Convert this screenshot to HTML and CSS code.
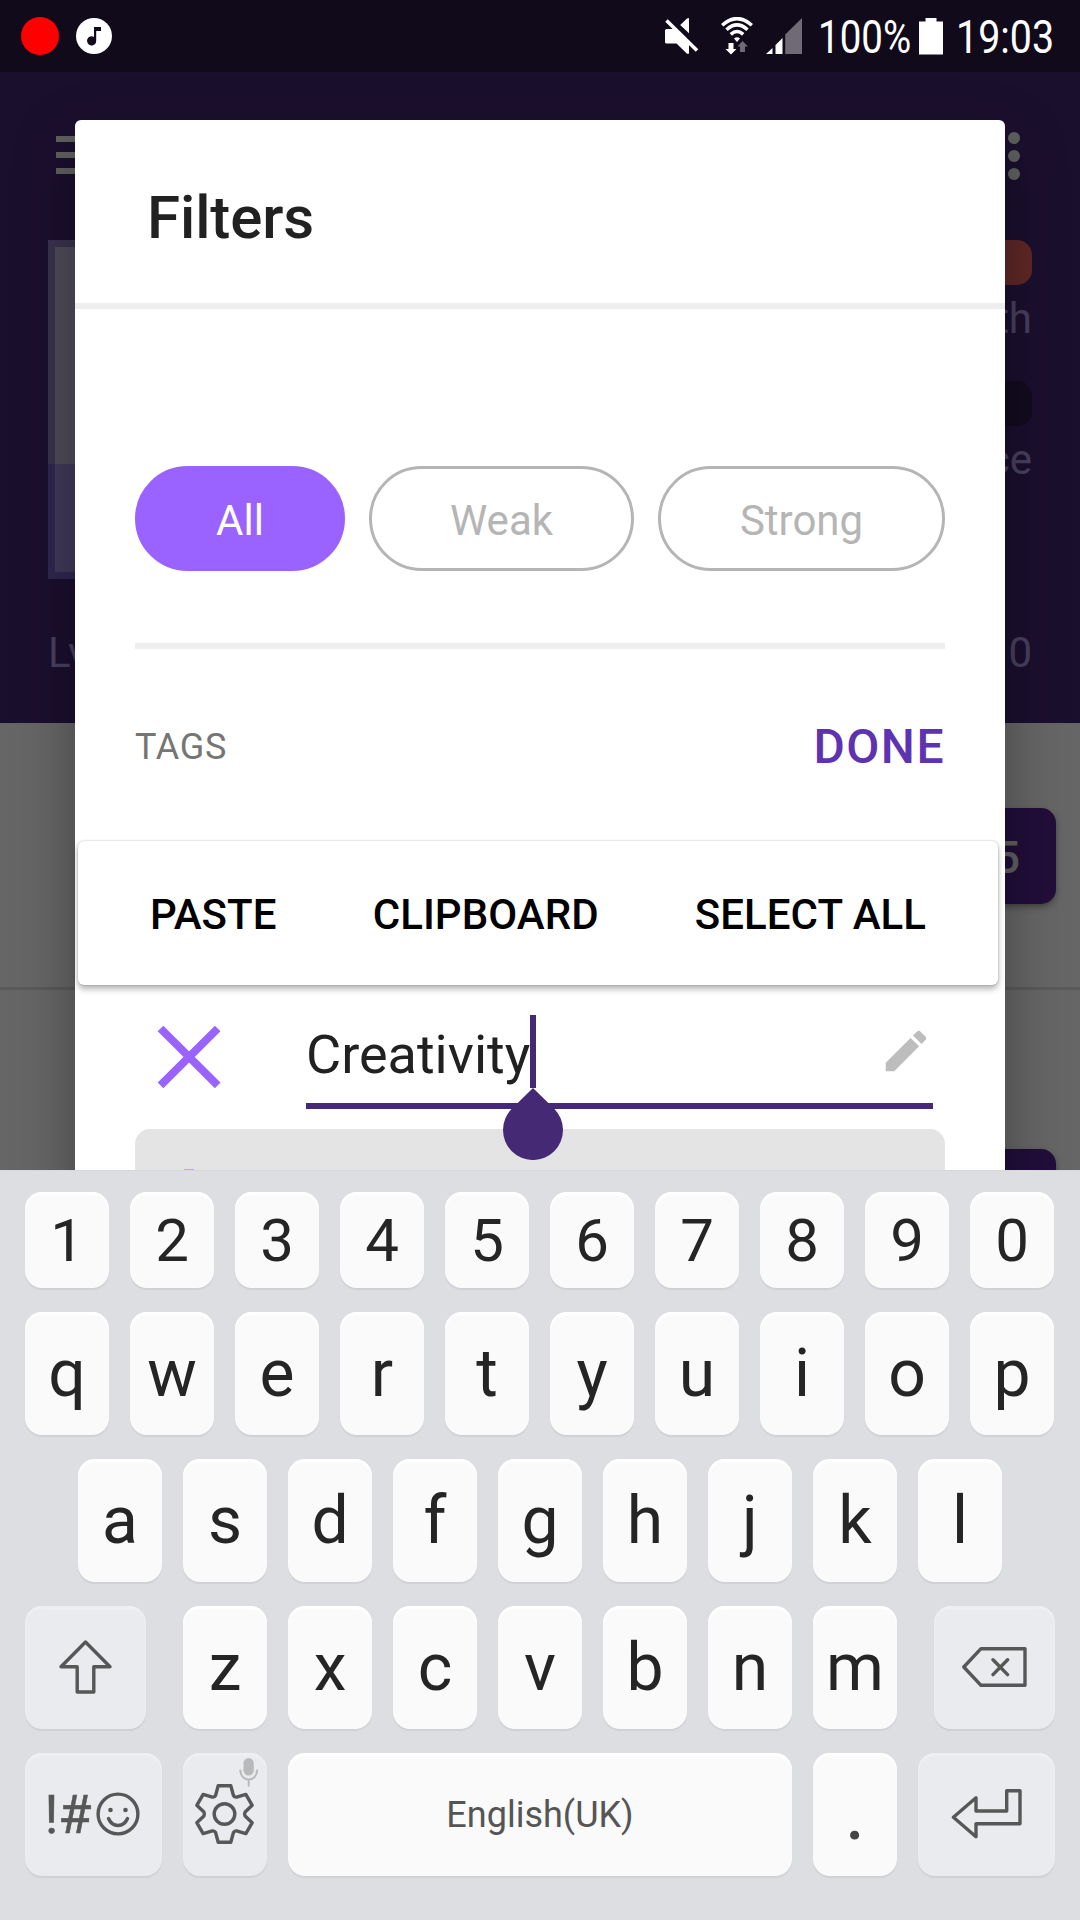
FILE: index.html
```html
<!DOCTYPE html>
<html lang="en">
<head>
<meta charset="utf-8">
<title>Filters</title>
<link rel="stylesheet" href="styles.css">
</head>
<body>
<div class="screen">
  <header class="status">
    <svg class="rec" width="38" height="38" viewBox="0 0 38 38"><circle cx="19" cy="19" r="19" fill="#f00"/></svg>
    <svg class="music" width="36" height="36" viewBox="0 0 36 36"><circle cx="18" cy="18" r="18" fill="#fff"/><path d="M18 9h7v4h-4.800v9.500a4.600 4.600 0 1 1-2.200-3.600z" fill="#110a1a"/></svg>
    <svg class="mute" width="34" height="36" viewBox="0 0 34 36"><path d="M1.500 11h8L24 25v10.700h-2L11.500 25.500h-10Q0 25.500 0 24V12.500Q0 11 1.500 11zM24 0v15.200L15.200 7 22 .5Q23 0 24 0z" fill="#fff"/><path d="M1.500 2.500 32 32.500" stroke="#fff" stroke-width="3.600"/></svg>
    <svg class="wifi" width="32" height="38" viewBox="0 0 32 38"><g fill="none" stroke="#fff" stroke-width="3.500"><path d="M1.200 8.200Q16-5 30.800 8.200M5.500 12.800Q16 3 26.500 12.800M9.800 17.400Q16 11.600 22.200 17.400"/></g><path d="M13 21.500q3-2.600 6 0l-3 3.500z" fill="#fff"/><path d="M7.500 26h5v6h3l-5.500 5.500L4.500 32h3z" fill="#fff"/><path d="M19 35h5v-5.500h3L21.500 24 16.500 29.500H19z" fill="#6f6a76"/></svg>
    <svg class="signal" width="36" height="36" viewBox="0 0 36 36"><path d="M0 36 6.500 30v6zM9.500 27 16.500 20v16h-7z" fill="#fff"/><path d="M19.200 16.500 36 0v36H19.200z" fill="#6f6a76"/></svg>
    <svg class="pct" width="98" height="60" viewBox="0 0 117 60" preserveAspectRatio="none"><text x="2.400" y="47">100%</text></svg>
    <svg class="battery" width="24" height="37" viewBox="0 0 24 37"><path d="M6.500 0h11v3.500H24V36.500H0V3.500h6.500z" fill="#fff"/></svg>
    <svg class="clock" width="106" height="60" viewBox="0 0 123.700 60" preserveAspectRatio="none"><text x="3.500" y="47">19:03</text></svg>
  </header>

  <main class="app">
    <section class="hero">
      <div class="toolbar">
        <svg width="54" height="38" viewBox="0 0 54 38"><path d="M0 3h54M0 19h54M0 35h54" stroke="#606060" stroke-width="6"/></svg>
        <svg width="12" height="48" viewBox="0 0 12 48"><g fill="#606060"><circle cx="6" cy="6" r="6"/><circle cx="6" cy="24" r="6"/><circle cx="6" cy="42" r="6"/></g></svg>
      </div>
      <div class="profile">
        <div class="avatar"><i class="sky"></i><i class="ground"></i></div>
        <div class="stats">
          <i class="bar health"></i><span>th</span>
          <i class="bar exp"></i><span>ce</span>
        </div>
      </div>
      <div class="level"><span>Lv</span><span>0</span></div>
    </section>
    <section class="list">
      <div class="item"><span class="badge">5</span></div>
      <div class="item"><span class="badge"></span></div>
    </section>
  </main>

  <section class="dialog">
    <h1 class="title">Filters</h1>
    <div class="body">
      <div class="chips"><span class="chip on">All</span><span class="chip weak">Weak</span><span class="chip strong">Strong</span></div>
      <div class="tagbar"><span class="tags">TAGS</span><span class="done">DONE</span></div>
      <div class="edit">
        <svg class="close" width="64" height="64" viewBox="0 0 64 64"><path d="M3.500 3.500 60.700 60.300M60.700 3.500 3.500 60.300" stroke="#9a63ff" stroke-width="8"/></svg>
        <div class="field"><span>Creativity</span><i class="caret"></i>
          <svg class="pencil" width="54" height="54" viewBox="0 0 24 24"><path fill="#bdbdbd" d="M3 17.250V21h3.750L17.810 9.940l-3.750-3.750L3 17.250zM20.710 7.040c.39-.39.39-1.020 0-1.410l-2.340-2.340c-.39-.39-1.020-.39-1.410 0l-1.830 1.830 3.750 3.750 1.830-1.830z"/></svg>
        </div>
      </div>
      <div class="tagcard"><i class="plus"></i></div>
    </div>
  </section>

  <div class="popup"><span>PASTE</span><span>CLIPBOARD</span><span>SELECT ALL</span></div>
  <svg class="handle" width="60" height="72" viewBox="0 0 60 72"><path d="M30 0 51.200 20.800A30 30 0 1 1 8.800 20.800z" fill="#452974"/></svg>

  <section class="keyboard">
    <div class="row digits"><b>1</b><b>2</b><b>3</b><b>4</b><b>5</b><b>6</b><b>7</b><b>8</b><b>9</b><b>0</b></div>
    <div class="row"><b>q</b><b>w</b><b>e</b><b>r</b><b>t</b><b>y</b><b>u</b><b>i</b><b>o</b><b>p</b></div>
    <div class="row home"><b>a</b><b>s</b><b>d</b><b>f</b><b>g</b><b>h</b><b>j</b><b>k</b><b>l</b></div>
    <div class="row">
      <b class="fn shift"><svg width="121" height="123" viewBox="0 0 121 123"><path d="M60.500 36 85 60.700H68.800V86H52.200V60.700H36z"/></svg></b>
      <b>z</b><b>x</b><b>c</b><b>v</b><b>b</b><b>n</b><b>m</b>
      <b class="fn back"><svg width="121" height="123" viewBox="0 0 121 123"><path d="M29.800 61 47 42.700H91V79.300H47zM59 53.800 73.600 68.600M73.600 53.800 59 68.600"/></svg></b>
    </div>
    <div class="row">
      <b class="fn wide symbols"><span class="sym">!#</span><svg class="smile" width="44" height="44" viewBox="0 0 44 44"><circle cx="22" cy="22" r="19.900"/><path d="M12.500 26.500Q15.500 33.500 22 33.500T31.500 26.500"/><circle class="dot" cx="14.500" cy="18" r="2.300"/><circle class="dot" cx="29.500" cy="18" r="2.300"/></svg></b>
      <b class="fn"><svg width="84" height="123" viewBox="0 0 84 123"><g transform="translate(41.500 61)"><circle r="10.300"/><path d="M-6.300-28.300H6.300L8.900-18.600Q10-16.500 12.100-16.900L21.350-19.600 27.700-8.700 20.600-2Q19.500 0 20.600 2L27.700 8.700 21.350 19.600 12.100 16.900Q10 16.500 8.900 18.600L6.300 28.300H-6.300L-8.900 18.600Q-10 16.500-12.100 16.900L-21.350 19.600-27.700 8.700-20.600 2Q-19.500 0-20.600-2L-27.700-8.700-21.350-19.600-12.100-16.900Q-10-16.500-8.900-18.600z"/></g><g class="mic"><rect x="60.500" y="5" width="10.300" height="17.500" rx="5.150"/><path d="M57.300 17.500a8.400 9 0 0 0 16.800 0M65.700 26.500v6.300"/></g></svg></b>
      <b class="space">English(UK)</b>
      <b class="period">.</b>
      <b class="fn wide"><svg width="137" height="123" viewBox="0 0 137 123"><path d="M35.400 64.300 58 44.800V58H88.700V37.800H102V70.800H58V83.800z"/></svg></b>
    </div>
  </section>
</div>
</body>
</html>
```
FILE: styles.css
```css
* { box-sizing: border-box; }
body { margin: 0; }
.screen {
  position: relative;
  width: 1080px;
  height: 1920px;
  overflow: hidden;
  font-family: Roboto, "Liberation Sans", sans-serif;
  background: #666;
}
svg { display: block; flex: none; }
i, b, span { font-style: normal; font-weight: 400; }

/* status bar */
.status {
  position: relative;
  z-index: 5;
  display: flex;
  align-items: flex-start;
  height: 72px;
  padding-left: 21px;
  background: #110a1a;
}
.status text { font-size: 46px; fill: #fff; }
.rec { margin-top: 17px; }
.music { margin: 18px 0 0 17px; }
.mute { margin: 18px 0 0 553px; }
.wifi { margin: 17px 0 0 22px; }
.signal { margin: 18px 0 0 13px; }
.pct { margin: 6px 0 0 14px; }
.battery { margin: 18px 0 0 5px; }
.clock { margin: 6px 0 0 10px; }

/* dimmed app behind the dialog */
.hero {
  height: 651px;
  padding: 60px 48px 0;
  background: #1b0f2e;
  color: #484060;
  font-size: 42px;
}
.toolbar {
  display: flex;
  justify-content: space-between;
  align-items: center;
  height: 48px;
  padding: 0 12px 0 8px;
}
.toolbar svg:first-child { margin-top: -2px; }
.profile {
  display: flex;
  justify-content: space-between;
  margin-top: 60px;
}
.avatar { display: flex; flex-direction: column; width: 340px; height: 339px; }
.sky { height: 224px; background: #4f4b59; border: 7px solid #3a324e; border-bottom: 0; }
.ground { flex: 1; background: #41395a; border: 7px solid #2f2750; border-top: 0; }
.stats { display: flex; flex-direction: column; align-items: flex-end; }
.stats span { height: 96px; line-height: 68px; }
.bar { width: 540px; height: 45px; border-radius: 15px; }
.health { background: #602727; }
.exp { background: #130b1f; }
.level {
  display: flex;
  justify-content: space-between;
  margin-top: 49px;
  line-height: 50px;
}
.item {
  display: flex;
  justify-content: flex-end;
  height: 267px;
  padding: 85px 24px 0;
  border-bottom: 3px solid #5a5a5a;
}
.item + .item { padding-top: 159px; height: 300px; }
.badge {
  width: 180px;
  height: 96px;
  padding-right: 36px;
  border-radius: 15px;
  background: #220e3a;
  box-shadow: 0 3px 6px rgba(0, 0, 0, .35);
  color: #606060;
  font-size: 45px;
  font-weight: 500;
  line-height: 100px;
  text-align: right;
}

/* dialog */
.dialog {
  position: absolute;
  left: 75px;
  top: 120px;
  width: 930px;
  height: 1100px;
  border-radius: 6px;
  background: #fff;
  box-shadow: 0 24px 60px rgba(0, 0, 0, .34);
}
.title {
  height: 189px;
  margin: 0;
  padding-left: 72px;
  border-bottom: 6px solid #eee;
  color: #212121;
  font-size: 60px;
  font-weight: 500;
  letter-spacing: -.1px;
  line-height: 195px;
}
.body { padding: 157px 60px 0; }
.chips {
  display: flex;
  gap: 24px;
  padding-bottom: 72px;
  border-bottom: 6px solid #eee;
}
.chip {
  width: 210px;
  height: 105px;
  border: 3px solid #b5b5b5;
  border-radius: 53px;
  color: #b5b5b5;
  font-size: 42px;
  line-height: 104px;
  text-align: center;
}
.chip.on { background: #9a63ff; border-color: #9a63ff; color: #fff; }
.chip.weak { width: 265px; }
.chip.strong { width: 287px; }
.tagbar {
  display: flex;
  justify-content: space-between;
  height: 194px;
  line-height: 196px;
}
.tags { color: #757575; font-size: 36px; letter-spacing: .7px; }
.done { color: #5e33b1; font-size: 48px; font-weight: 500; letter-spacing: 1.5px; }
.edit {
  display: flex;
  align-items: flex-start;
  height: 286px;
  padding: 172px 12px 0 22px;
}
.close { margin-top: 10px; }
.field {
  display: flex;
  flex: 1;
  height: 94px;
  margin-left: 85px;
  border-bottom: 6px solid #452974;
  color: #212121;
  font-size: 54px;
  line-height: 80px;
}
.caret { width: 6px; height: 73px; background: #452974; }
.pencil { margin: 9px 0 0 auto; }
.tagcard {
  display: flex;
  height: 90px;
  padding: 40px 0 0 49px;
  border-radius: 15px;
  background: #e4e4e4;
}
.plus { width: 10px; height: 20px; background: #c1a5f0; }

/* text selection popup */
.popup {
  position: absolute;
  left: 78px;
  top: 841px;
  width: 920px;
  height: 144px;
  display: flex;
  justify-content: space-between;
  padding: 0 72px;
  border-radius: 6px;
  background: #fff;
  box-shadow: 0 4px 6px rgba(0, 0, 0, .3), 0 0 2px rgba(0, 0, 0, .25);
  color: #000;
  font-size: 42px;
  letter-spacing: .05px;
  line-height: 147px;
}
.popup span { font-weight: 500; }
.handle { position: absolute; left: 503px; top: 1088px; }

/* keyboard */
.keyboard {
  position: absolute;
  left: 0;
  top: 1170px;
  width: 1080px;
  height: 750px;
  display: flex;
  flex-direction: column;
  gap: 24px;
  padding: 21px 25px 0;
  border-top: 1px solid #d6d8da;
  background: #dddee2;
}
.row { display: flex; gap: 21px; height: 123px; }
.row b {
  flex: none;
  display: flex;
  justify-content: center;
  width: 84px;
  border-radius: 17px;
  background: #fafafa;
  box-shadow: inset 0 3px 2px #fff, 0 2px 1px #d0d1d5;
  color: #252525;
  font-size: 66px;
  line-height: 123px;
}
.row.digits { height: 96px; }
.digits b { font-size: 60px; line-height: 97px; }
.row.home { padding-left: 53px; }
.row .fn { background: #e9ebee; box-shadow: inset 0 3px 2px #eff0f3, 0 2px 1px #cfd0d4; }
.row .shift { width: 121px; margin-right: 16px; }
.row .back { width: 121px; margin-left: 16px; }
.row .wide { width: 137px; }
.row .symbols { padding-right: 3px; }
.row .space { width: 504px; color: #555; font-size: 36px; line-height: 125px; }
.row .period { color: #444; font-weight: 500; line-height: 128px; }
.fn svg { fill: none; stroke: #575757; stroke-width: 3.4; stroke-linejoin: round; stroke-linecap: round; }
.fn .dot { fill: #575757; stroke: none; }
.mic { stroke: #b8b9ba; stroke-width: 2; }
.mic rect { fill: #b8b9ba; stroke: none; }
.sym { color: #575757; font-size: 54px; -webkit-text-stroke: .5px #575757; }
.row .smile { margin: 39px 0 0 4px; }
```
